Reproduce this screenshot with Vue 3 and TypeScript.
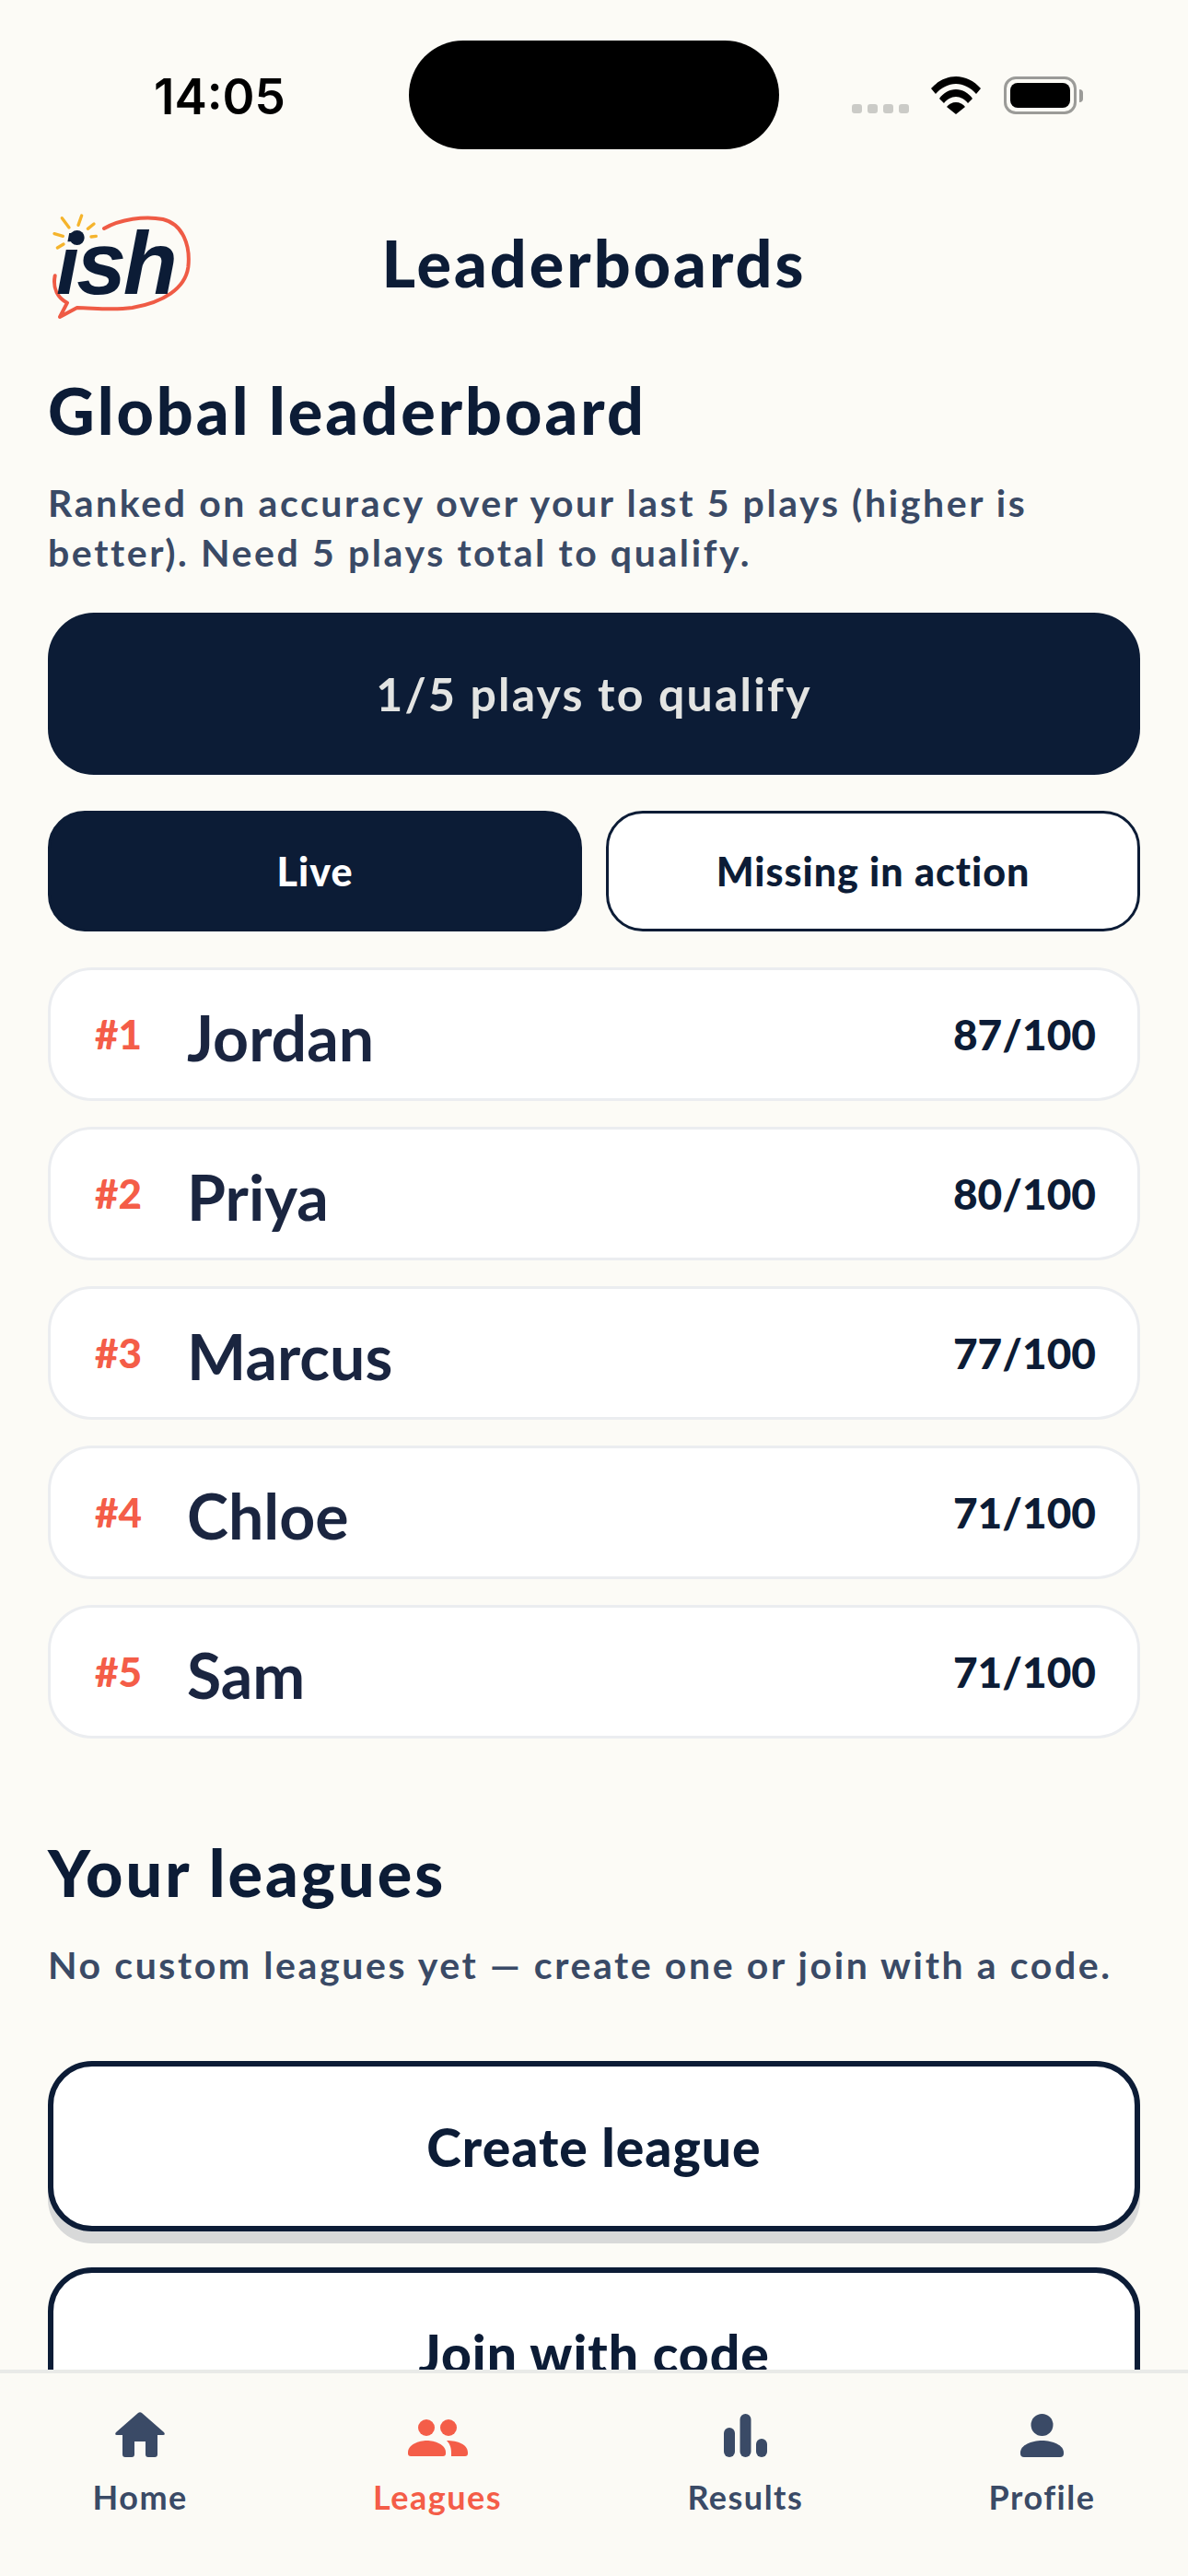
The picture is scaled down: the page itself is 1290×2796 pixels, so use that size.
<template>
  <div class="screen">
    <div class="status-bar">
      <span class="time">14:05</span>
      <div class="island"></div>
      <div class="status-icons">
        <div class="signal">
          <i v-for="n in 4" :key="n"></i>
        </div>
        <svg class="wifi" width="54" height="41" viewBox="0 0 54 41">
          <path d="M0 13C7 5 17 0 27 0s20 5 27 13l-5 6C43 12 35 8 27 8S11 12 5 19Z" />
          <path d="M9 24c4-6 11-10 18-10s14 4 18 10l-5 5c-3-4-8-7-13-7s-10 3-13 7Z" />
          <path d="M17 33c2-3 6-5 10-5s8 2 10 5L27 41Z" />
        </svg>
        <div class="battery"><div class="battery-fill"></div></div>
        <div class="battery-nub"></div>
      </div>
    </div>

    <div class="scroll">
      <header class="top">
        <svg class="logo" width="160" height="124" viewBox="50 60 480 372">
          <path
            fill="none"
            stroke="#EF5B45"
            stroke-width="12"
            stroke-linecap="round"
            stroke-linejoin="round"
            d="M248 114C300 84 380 72 440 84C505 100 530 170 522 240C512 310 440 355 340 372C270 382 210 372 160 372L104 402L128 356C98 340 80 310 88 268"
          />
          <g stroke="#F5B42C" stroke-width="10" stroke-linecap="round">
            <path d="M111 80L134 111" />
            <path d="M175 72L164 103" />
            <path d="M215 99L195 115" />
            <path d="M86 131L114 139" />
            <path d="M206 141L222 139" />
            <path d="M96 177L116 165" />
          </g>
          <text class="logo-text" x="92" y="328"><tspan class="logo-i">i</tspan><tspan dx="-8">s</tspan><tspan dx="-10">h</tspan></text>
          <circle cx="160" cy="144" r="24" fill="#0C1C36" />
        </svg>
        <h1 class="page-title">Leaderboards</h1>
        <span></span>
      </header>

      <section class="global">
        <h2 class="heading">Global leaderboard</h2>
        <p class="sub">Ranked on accuracy over your last 5 plays (higher is better). Need 5 plays total to qualify.</p>
        <div class="qualify">1/5 plays to qualify</div>
        <div class="tabs">
          <button class="tab active">Live</button>
          <button class="tab">Missing in action</button>
        </div>
        <ul class="rows">
          <li v-for="(p, i) in players" :key="p.name" class="row">
            <span class="rank">#{{ i + 1 }}</span>
            <span class="name">{{ p.name }}</span>
            <span class="score">{{ p.score }}/100</span>
          </li>
        </ul>
      </section>

      <section class="leagues">
        <h2 class="heading">Your leagues</h2>
        <p class="sub">No custom leagues yet — create one or join with a code.</p>
        <button class="big-btn shadow">Create league</button>
        <button class="big-btn">Join with code</button>
      </section>
    </div>

    <nav class="tabbar">
      <div v-for="t in navItems" :key="t.label" class="nav-item" :class="{ on: t.label === 'Leagues' }">
        <div class="nav-icon">
          <svg v-if="t.label === 'Home'" width="54" height="49" viewBox="0 0 54 49">
            <path d="M25 1Q27-.5 29 1L53 22Q55 25 52 25H46V46Q46 49 43 49H36Q33 49 33 46V32H21V46Q21 49 18 49H11Q8 49 8 46V25H2Q-1 25 1 22Z" />
          </svg>
          <svg v-else-if="t.label === 'Leagues'" width="65" height="41" viewBox="0 0 65 41">
            <circle cx="20" cy="9" r="9" />
            <circle cx="44" cy="9" r="9" />
            <path d="M0 36C0 27 12 23 20.500 23S41 27 41 36V37Q41 40 38 40H3Q0 40 0 37Z" />
            <path d="M42 23C54 23 65 27 65 36V37Q65 40 62 40H47V36C47 30 45 26 42 23Z" />
          </svg>
          <svg v-else-if="t.label === 'Results'" width="47" height="47" viewBox="0 0 47 47">
            <rect x="0" y="15" width="12" height="32" rx="6" />
            <rect x="17.500" y="0" width="12" height="47" rx="6" />
            <rect x="35" y="27" width="12" height="20" rx="6" />
          </svg>
          <svg v-else width="47" height="47" viewBox="0 0 47 47">
            <circle cx="23.500" cy="12" r="12" />
            <path d="M0 42C0 34 12 29 23.500 29S47 34 47 42V43Q47 47 43 47H4Q0 47 0 43Z" />
          </svg>
        </div>
        <span class="nav-label">{{ t.label }}</span>
      </div>
    </nav>
  </div>
</template>

<script setup lang="ts">
const players = [
  { name: 'Jordan', score: 87 },
  { name: 'Priya', score: 80 },
  { name: 'Marcus', score: 77 },
  { name: 'Chloe', score: 71 },
  { name: 'Sam', score: 71 },
]

const navItems = [{ label: 'Home' }, { label: 'Leagues' }, { label: 'Results' }, { label: 'Profile' }]
</script>

<style>
html,
body {
  margin: 0;
  background: #fcfbf6;
}
</style>

<style scoped>
* {
  box-sizing: border-box;
}

.screen {
  width: 1290px;
  height: 2796px;
  display: flex;
  flex-direction: column;
  overflow: hidden;
  position: relative;
  background: #fcfbf6;
  color: #0c1c36;
  font-family: Lato, 'Noto Sans', sans-serif;
}

.status-bar {
  height: 230px;
  flex: none;
  display: flex;
  justify-content: space-between;
  align-items: flex-start;
  padding: 77px 114px 0 167px;
}

.time {
  font-family: Inter, 'Liberation Sans', sans-serif;
  font-size: 53px;
  font-weight: 600;
  line-height: 56px;
  color: #000;
}

.island {
  position: absolute;
  left: 444px;
  top: 44px;
  width: 402px;
  height: 118px;
  background: #000;
  border-radius: 59px;
}

.status-icons {
  display: flex;
  align-items: flex-end;
  margin-top: 6px;
  height: 41px;
}

.signal {
  display: flex;
  gap: 6px;
  margin-right: 24px;
  margin-bottom: 1px;
}

.signal i {
  width: 11px;
  height: 10px;
  border-radius: 3px;
  background: #cbcbc7;
}

.wifi {
  fill: #000;
  margin-right: 25px;
}

.battery {
  width: 79px;
  height: 41px;
  border: 3px solid #9b9b98;
  border-radius: 13px;
  padding: 4px;
}

.battery-fill {
  width: 100%;
  height: 100%;
  background: #000;
  border-radius: 8px;
}

.battery-nub {
  width: 4px;
  height: 14px;
  background: #9b9b98;
  border-radius: 0 4px 4px 0;
  margin: 0 0 13px 3px;
}

.scroll {
  flex: 1;
  min-height: 0;
  overflow: hidden;
  padding: 0 52px;
}

.top {
  display: grid;
  grid-template-columns: 1fr auto 1fr;
  align-items: center;
  height: 124px;
}

.logo {
  display: block;
  margin-left: -5px;
  overflow: visible;
}

.logo-text {
  font-family: 'Liberation Sans', sans-serif;
  font-style: italic;
  font-weight: 700;
  font-size: 290px;
  fill: #0c1c36;
}

.logo-i {
  font-size: 270px;
}

.page-title {
  margin: 0 0 14px;
  font-size: 70px;
  font-weight: 900;
  line-height: 80px;
  letter-spacing: 3px;
  color: #0c1c36;
}

.heading {
  margin: 0;
  font-size: 70px;
  font-weight: 900;
  line-height: 84px;
  letter-spacing: 3px;
  color: #0c1c36;
}

.global {
  margin-top: 49px;
}

.sub {
  margin: 32px 0 0;
  font-size: 41px;
  font-weight: 700;
  line-height: 54px;
  letter-spacing: 2.6px;
  color: #3a4a66;
}

.qualify {
  margin-top: 38px;
  height: 176px;
  border-radius: 50px;
  background: #0c1c36;
  color: #e3e4e2;
  font-size: 50px;
  font-weight: 700;
  letter-spacing: 2.2px;
  display: flex;
  align-items: center;
  justify-content: center;
}

.tabs {
  display: grid;
  grid-template-columns: 1fr 1fr;
  gap: 26px;
  margin-top: 39px;
}

.tab {
  height: 131px;
  border-radius: 40px;
  border: 3px solid #0c1c36;
  background: #fff;
  color: #0c1c36;
  font-family: inherit;
  font-size: 43px;
  font-weight: 900;
  letter-spacing: 1px;
  padding: 0;
}

.tab.active {
  background: #0c1c36;
  color: #fff;
}

.rows {
  list-style: none;
  margin: 39px 0 0;
  padding: 0;
  display: flex;
  flex-direction: column;
  gap: 28px;
}

.row {
  height: 145px;
  display: flex;
  align-items: center;
  padding: 0 45px 0 48px;
  background: #fff;
  border: 3px solid #ebedf0;
  border-radius: 48px;
}

.rank {
  width: 100px;
  flex: none;
  font-size: 44px;
  font-weight: 900;
  color: #f45d48;
  margin-top: -1px;
}

.name {
  flex: 1;
  font-size: 68px;
  font-weight: 700;
  color: #1a2540;
  margin-top: 5px;
}

.score {
  font-size: 46px;
  font-weight: 900;
  color: #0c1c36;
}

.leagues {
  margin-top: 103px;
}

.big-btn {
  display: block;
  width: 100%;
  height: 185px;
  margin-top: 39px;
  border: 6px solid #0c1c36;
  border-radius: 48px;
  background: #fff;
  color: #0c1c36;
  font-family: inherit;
  font-size: 57px;
  font-weight: 900;
  letter-spacing: 1px;
  padding: 0;
}

.big-btn.shadow {
  margin-top: 77px;
  box-shadow: 0 13px 0 rgba(12, 28, 54, 0.15);
}

.tabbar {
  flex: none;
  height: 224px;
  border-top: 4px solid #e9eae8;
  background: #fbfaf5;
  display: flex;
  justify-content: space-around;
  padding-top: 41px;
  align-items: flex-start;
}

.nav-item {
  display: flex;
  flex-direction: column;
  align-items: center;
  color: #3a4a66;
}

.nav-item.on {
  color: #f45d48;
}

.nav-icon {
  height: 50px;
  display: flex;
  align-items: flex-end;
  justify-content: center;
}

.nav-icon svg {
  fill: currentColor;
  display: block;
}

.nav-label {
  margin-top: 20px;
  font-size: 36px;
  line-height: 46px;
  font-weight: 700;
  letter-spacing: 1.5px;
}
</style>
